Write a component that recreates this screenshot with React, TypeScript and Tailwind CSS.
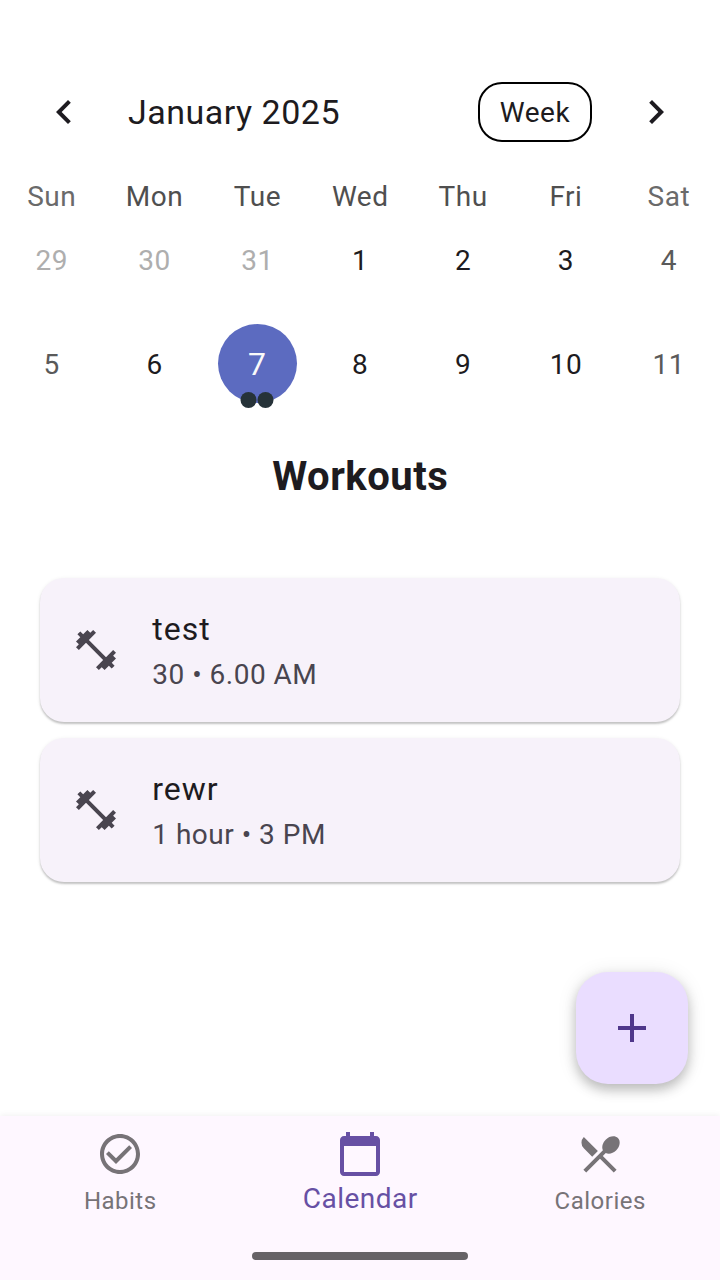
import {
  MdAdd,
  MdCalendarToday,
  MdCheckCircleOutline,
  MdChevronLeft,
  MdChevronRight,
  MdFitnessCenter,
  MdRestaurantMenu,
} from 'react-icons/md';

const weekdays = ['Sun', 'Mon', 'Tue', 'Wed', 'Thu', 'Fri', 'Sat'];

const days = [
  { n: 29, outside: true },
  { n: 30, outside: true },
  { n: 31, outside: true },
  { n: 1 },
  { n: 2 },
  { n: 3 },
  { n: 4, weekend: true },
  { n: 5, weekend: true },
  { n: 6 },
  { n: 7, selected: true },
  { n: 8 },
  { n: 9 },
  { n: 10 },
  { n: 11, weekend: true },
];

const workouts = [
  { title: 'test', detail: '30 • 6.00 AM' },
  { title: 'rewr', detail: '1 hour • 3 PM' },
];

function Day({ n, outside, weekend, selected }: { n: number; outside?: boolean; weekend?: boolean; selected?: boolean }) {
  if (selected) {
    return (
      <div className="relative flex h-[104px] items-center justify-center pb-px">
        <div className="flex size-[79px] items-center justify-center rounded-full bg-[#5c6bc0] pt-px text-[32px] tracking-[0.5px] text-[#fafafa]">
          {n}
        </div>
        <div className="absolute bottom-[8px] left-1/2 flex -translate-x-1/2 gap-px">
          <span className="size-4 rounded-full bg-[#263238]" />
          <span className="size-4 rounded-full bg-[#263238]" />
        </div>
      </div>
    );
  }
  const color = outside ? 'text-[#aeaeae]' : weekend ? 'text-[#5a5a5a]' : 'text-[#1d1b20]';
  return <div className={`flex h-[104px] items-center justify-center pt-0.5 pl-[0.5px] ${color}`}>{n}</div>;
}

export default function App() {
  return (
    <div className="flex h-[1280px] w-[720px] flex-col overflow-hidden bg-white font-['Roboto',sans-serif] text-[28px] leading-10 tracking-[0.5px] text-[#1d1b20]">
      <header className="mt-16 flex h-24 items-center px-10">
        <MdChevronLeft className="size-12" />
        <h1 className="ml-10 flex-1 text-[34px] tracking-[0.5px]">January 2025</h1>
        <button className="mr-10 flex h-[60px] w-[114.5px] items-center justify-center rounded-[24px] border-2 border-black pt-0.5 pl-[0.5px]">
          Week
        </button>
        <MdChevronRight className="size-12" />
      </header>

      <section>
        <div className="mt-[17px] grid h-[31px] grid-cols-7 text-center text-[#4f4f4f]">
          {weekdays.map((d) => (
            <span key={d} className={d === 'Sun' || d === 'Sat' ? 'pl-[0.5px] text-[#6a6a6a]' : 'pl-[0.5px]'}>
              {d}
            </span>
          ))}
        </div>
        <div className="grid grid-cols-7">
          {days.map((d) => (
            <Day key={d.n} {...d} />
          ))}
        </div>
      </section>

      <h2 className="mt-[37px] h-12 pl-[0.5px] text-center text-[40px] leading-[48px] font-bold tracking-[0.5px]">
        Workouts
      </h2>

      <main className="mt-[77px] flex flex-1 flex-col gap-4 px-10">
        {workouts.map((w) => (
          <article
            key={w.title}
            className="flex h-36 items-center rounded-[24px] bg-[#f7f2fa] px-8 shadow-[0_2px_2px_rgba(0,0,0,0.2),0_1px_4px_rgba(0,0,0,0.08)]"
          >
            <MdFitnessCenter className="size-12 text-[#49454f]" />
            <div className="ml-[32.25px]">
              <div className="h-[50px] text-[32px] leading-[48px] tracking-[1px]">{w.title}</div>
              <div className="text-[#49454f]">{w.detail}</div>
            </div>
          </article>
        ))}
      </main>

      <button className="mr-8 mb-8 flex size-28 items-center justify-center self-end rounded-[32px] bg-[#eaddff] text-[#4f378b] shadow-[0_6px_12px_rgba(0,0,0,0.22),0_2px_20px_rgba(0,0,0,0.1)]">
        <MdAdd className="size-12" />
      </button>

      <nav className="flex h-[164px] flex-col bg-[#fef7ff] shadow-[0_-1px_6px_rgba(0,0,0,0.06)]">
        <div className="grid grid-cols-3 pt-[14px] text-[24px]">
          <div className="flex flex-col items-center text-[#777377]">
            <MdCheckCircleOutline className="size-12" />
            <span className="mt-[3px] pl-[0.5px] tracking-[0.5px]">Habits</span>
          </div>
          <div className="flex flex-col items-center text-[#6750a4]">
            <MdCalendarToday className="size-12" />
            <span className="mt-px pl-[0.5px] text-[28px] tracking-[0.5px]">Calendar</span>
          </div>
          <div className="flex flex-col items-center text-[#777377]">
            <MdRestaurantMenu className="size-12" />
            <span className="mt-[3px] pl-[0.5px] tracking-[0.5px]">Calories</span>
          </div>
        </div>
        <div className="mt-auto mb-5 h-2 w-[216px] self-center rounded-full bg-[#666266]" />
      </nav>
    </div>
  );
}
